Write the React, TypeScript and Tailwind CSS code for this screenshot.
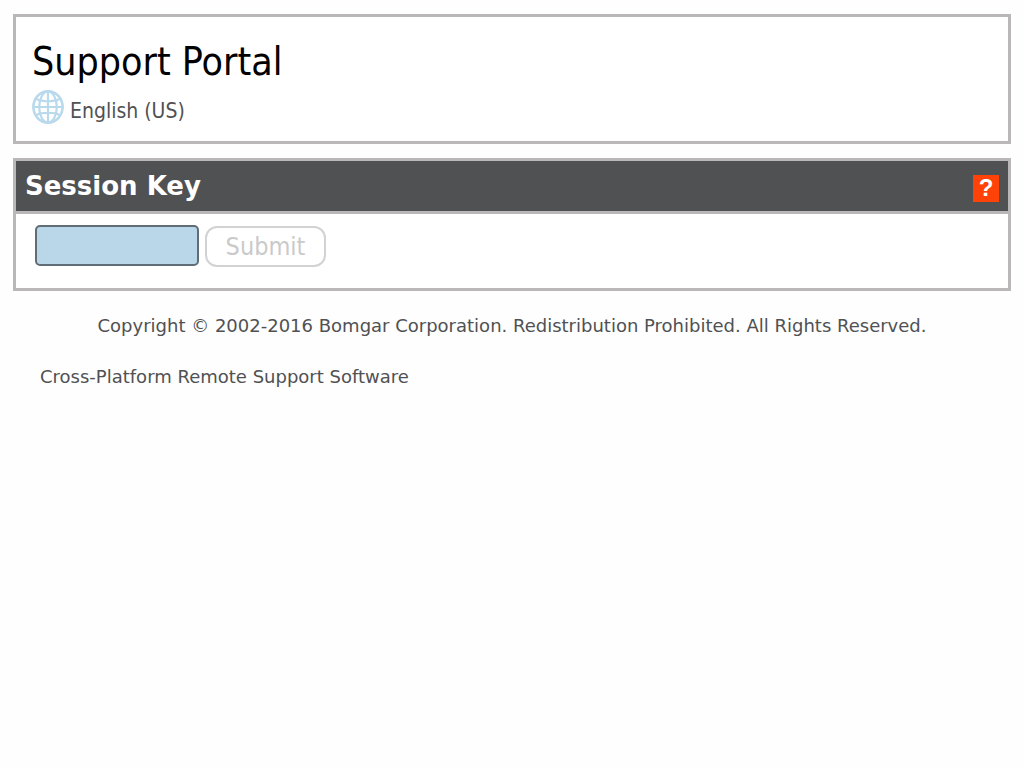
import { useState } from "react";

function GlobeIcon() {
  return (
    <svg
      className="h-[34px] w-8 shrink-0"
      viewBox="0 0 32 34"
      fill="none"
      stroke="#b9d9ec"
      strokeWidth="2.2"
      aria-hidden="true"
    >
      <ellipse cx="16" cy="17" rx="14.6" ry="15.6" strokeWidth="2.6" />
      <ellipse cx="16" cy="17" rx="8.8" ry="15.6" />
      <path d="M16 1v32M1 17h30M4.5 9C10 12 22 12 27.5 9M4.5 25C10 22 22 22 27.5 25" />
    </svg>
  );
}

export default function App() {
  const [key, setKey] = useState("");

  return (
    <div className="min-h-screen bg-[#fefefe] px-[13px] pt-3.5 font-['DejaVu_Sans',sans-serif] text-[#505153]">
      <header className="border-3 border-[#b9b7b8] bg-white px-4 pt-[22px] pb-4">
        <h1 className="font-['DejaVu_Sans_Condensed','DejaVu_Sans',sans-serif] text-[39px] leading-[46px] text-black">
          Support Portal
        </h1>
        <div className="mt-1 flex items-center gap-1.5">
          <GlobeIcon />
          <a
            href="#language"
            className="pt-2 font-['DejaVu_Sans_Condensed','DejaVu_Sans',sans-serif] text-[21px] leading-7"
          >
            English (US)
          </a>
        </div>
      </header>

      <main className="mt-3.5 border-3 border-[#b9b7b8] bg-white">
        <div className="flex h-[53px] items-center justify-between border-b-3 border-[#b9b7b8] bg-[#505153] px-[9px]">
          <h2 className="text-[26px] leading-8 font-bold text-white">
            <label htmlFor="session-key">Session Key</label>
          </h2>
          <button
            type="button"
            aria-label="Help"
            className="mt-1 flex h-[27px] w-[26px] items-center justify-center bg-[#ff4208] font-['Liberation_Sans',sans-serif] text-2xl leading-6 font-bold text-white"
          >
            ?
          </button>
        </div>
        <form
          className="flex items-start gap-1.5 px-[19px] pt-[11px] pb-[21px]"
          onSubmit={(event) => event.preventDefault()}
        >
          <input
            id="session-key"
            type="text"
            value={key}
            onChange={(event) => setKey(event.target.value)}
            className="h-[41px] w-[164px] rounded-[5px] border-2 border-[#606d76] bg-[#b9d7e9] px-2 text-xl outline-none"
          />
          <button
            type="submit"
            disabled={key === ""}
            className="mt-px h-[41px] w-[121px] rounded-xl border-2 border-[#d2d2d2] bg-white font-['DejaVu_Sans_Condensed','DejaVu_Sans',sans-serif] text-[25px] leading-8 text-[#cacaca]"
          >
            Submit
          </button>
        </form>
      </main>

      <footer className="text-lg leading-6">
        <p className="mt-[23px] text-center">
          Copyright © 2002-2016 Bomgar Corporation. Redistribution Prohibited. All Rights Reserved.
        </p>
        <p className="mt-[27px] px-[27px]">
          <a href="#about">Cross-Platform Remote Support Software</a>
        </p>
      </footer>
    </div>
  );
}
